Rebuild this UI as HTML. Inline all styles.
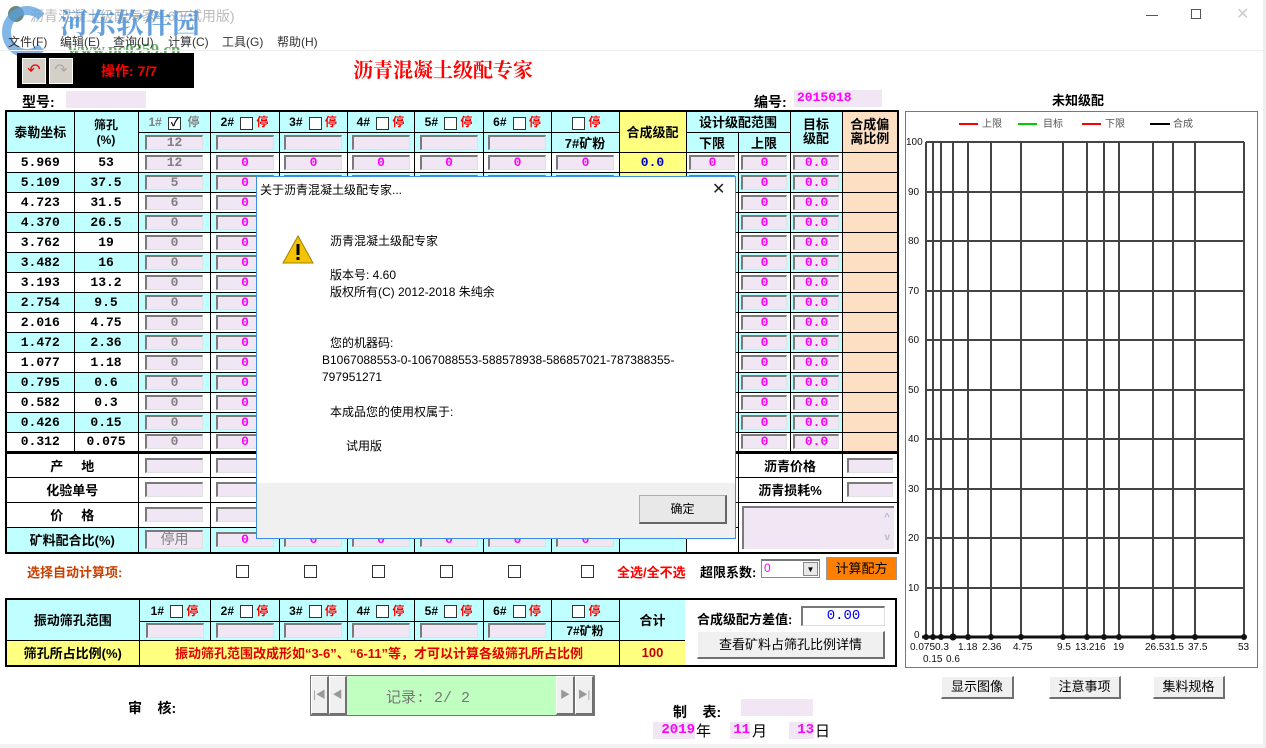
<!DOCTYPE html>
<html><head><meta charset="utf-8">
<style>
*{box-sizing:border-box;margin:0;padding:0}
body{width:1266px;height:748px;overflow:hidden;background:#fff;position:relative;font-family:"Liberation Sans","Noto Sans CJK SC",sans-serif;font-size:12px;color:#000}
.a{position:absolute}
.b{font-weight:bold}
table{border-collapse:collapse;table-layout:fixed;position:absolute}
td{border:1px solid #000;text-align:center;vertical-align:middle;padding:0;font-weight:bold;font-size:12px;overflow:hidden;white-space:nowrap}
.c{background:#c0ffff}.y{background:#ffff80}.p{background:#fde0c4}.w{background:#fff}
.i{display:inline-block;width:58px;height:15px;background:#f0e6f4;border-top:2px solid #7a7a7a;border-left:2px solid #7a7a7a;border-right:1px solid #e0e0e0;border-bottom:1px solid #e0e0e0;line-height:12px;font-family:"Liberation Mono",monospace;font-weight:bold;font-size:13px;color:#ff00ff;vertical-align:middle}
.g{color:#808080}
.s{width:46px}
.ck{display:inline-block;width:13px;height:13px;border:1px solid #333;background:#fff;vertical-align:middle;margin:0 3px;font-size:11px;line-height:11px}
.r{color:#f00}
.n{font-family:"Liberation Mono",monospace;font-weight:bold;font-size:13px}
.btn{position:absolute;background:#f0f0f0;border:1px solid #fff;border-right:2px solid #707070;border-bottom:2px solid #707070;text-align:center;font-size:13px}
.m{position:absolute;top:33px;font-size:12px;color:#333}
</style></head><body>
<!-- title bar -->
<div class="a" style="left:8px;top:6px;width:16px;height:16px;border-radius:50%;background:#6a8a7a"></div>
<div class="a" style="left:30px;top:6px;font-size:14px;color:#bbb">沥青混凝土级配专家4.60(试用版)</div>
<div class="a" style="left:2px;top:6px;width:50px;height:52px;border-radius:50%;border:9px solid #5aa0e0;border-right-color:transparent;opacity:.75"></div>
<div class="a b" style="left:60px;top:2px;font-size:28px;color:#4a90d8;opacity:.85;font-family:'Noto Serif CJK SC',serif">河东软件园</div>
<div class="a b" style="left:68px;top:40px;font-size:17px;color:#3a9a3a;opacity:.8;font-family:'Liberation Serif',serif">www.pc0359.cn</div>
<div class="a" style="left:1146px;top:15px;width:12px;height:1px;background:#555"></div>
<div class="a" style="left:1191px;top:9px;width:10px;height:10px;border:1px solid #555"></div>
<div class="a" style="left:1236px;top:4px;font-size:16px;color:#ccc">✕</div>
<div class="m" style="left:8px">文件(F)</div><div class="m" style="left:60px">编辑(E)</div><div class="m" style="left:113px">查询(U)</div><div class="m" style="left:168px">计算(C)</div><div class="m" style="left:222px">工具(G)</div><div class="m" style="left:277px">帮助(H)</div>
<div class="a" style="left:0;top:50px;width:1266px;height:1px;background:#eee"></div>
<!-- black box -->
<div class="a" style="left:17px;top:53px;width:177px;height:35px;background:#000"></div>
<div class="a" style="left:22px;top:58px;width:24px;height:26px;background:#d4d0c8;border:1px solid #fff;color:#e00;font-size:16px;text-align:center;line-height:24px">↶</div>
<div class="a" style="left:49px;top:58px;width:24px;height:26px;background:#d4d0c8;border:1px solid #fff;color:#aaa;font-size:16px;text-align:center;line-height:24px">↷</div>
<div class="a b" style="left:101px;top:61px;color:#f00;font-size:14px">操作: 7/7</div>
<div class="a b" style="left:353px;top:54px;color:#f00;font-size:20px;font-family:'Noto Serif CJK SC',serif">沥青混凝土级配专家</div>
<div class="a b" style="left:22px;top:92px;font-size:14px">型号:</div>
<div class="a" style="left:66px;top:91px;width:80px;height:17px;background:#f0e6f4"></div>
<div class="a b" style="left:754px;top:92px;font-size:14px">编号:</div>
<div class="a" style="left:794px;top:90px;width:88px;height:17px;background:#f0e6f4;color:#f0f;font-weight:bold;font-family:'Liberation Mono',monospace;font-size:13px;padding-left:3px">2015018</div>

<table style="left:5px;top:110px;width:892px;border:2px solid #000">
<colgroup><col style="width:68px"><col style="width:64px"><col style="width:72px"><col style="width:69px"><col style="width:68px"><col style="width:67px"><col style="width:69px"><col style="width:68px"><col style="width:68px"><col style="width:67px"><col style="width:52px"><col style="width:52px"><col style="width:52px"><col style="width:56px"></colgroup>
<tr style="height:21px" class="c"><td rowspan="2" style="font-size:13px">泰勒坐标</td><td rowspan="2">筛孔<br>(%)</td><td class="g">1# <span class="ck" style="color:#000">✓</span> 停</td><td>2# <span class="ck"></span><span class="r">停</span></td><td>3# <span class="ck"></span><span class="r">停</span></td><td>4# <span class="ck"></span><span class="r">停</span></td><td>5# <span class="ck"></span><span class="r">停</span></td><td>6# <span class="ck"></span><span class="r">停</span></td><td><span class="ck"></span><span class="r">停</span></td><td rowspan="2" class="y" style="font-size:13px">合成级配</td><td colspan="2" style="font-size:13px">设计级配范围</td><td rowspan="2" style="font-size:13px;line-height:14px">目标<br>级配</td><td rowspan="2" class="p" style="font-size:13px;line-height:14px">合成偏<br>离比例</td></tr>
<tr style="height:20px" class="c"><td><span class="i g">12</span></td><td><span class="i"></span></td><td><span class="i"></span></td><td><span class="i"></span></td><td><span class="i"></span></td><td><span class="i"></span></td><td style="font-size:13px">7#矿粉</td><td style="font-size:13px">下限</td><td style="font-size:13px">上限</td></tr>
<tr style="height:20px" class="w"><td class="n">5.969</td><td class="n">53</td><td><span class="i g">12</span></td><td><span class="i">0</span></td><td><span class="i">0</span></td><td><span class="i">0</span></td><td><span class="i">0</span></td><td><span class="i">0</span></td><td><span class="i">0</span></td><td class="y n" style="color:#00c">0.0</td><td><span class="i s">0</span></td><td><span class="i s">0</span></td><td><span class="i s">0.0</span></td><td class="p"></td></tr>
<tr style="height:20px" class="c"><td class="n">5.109</td><td class="n">37.5</td><td><span class="i g">5</span></td><td><span class="i">0</span></td><td><span class="i">0</span></td><td><span class="i">0</span></td><td><span class="i">0</span></td><td><span class="i">0</span></td><td><span class="i">0</span></td><td class="y"></td><td><span class="i s">0</span></td><td><span class="i s">0</span></td><td><span class="i s">0.0</span></td><td class="p"></td></tr>
<tr style="height:20px" class="w"><td class="n">4.723</td><td class="n">31.5</td><td><span class="i g">6</span></td><td><span class="i">0</span></td><td><span class="i">0</span></td><td><span class="i">0</span></td><td><span class="i">0</span></td><td><span class="i">0</span></td><td><span class="i">0</span></td><td class="y"></td><td><span class="i s">0</span></td><td><span class="i s">0</span></td><td><span class="i s">0.0</span></td><td class="p"></td></tr>
<tr style="height:20px" class="c"><td class="n">4.370</td><td class="n">26.5</td><td><span class="i g">0</span></td><td><span class="i">0</span></td><td><span class="i">0</span></td><td><span class="i">0</span></td><td><span class="i">0</span></td><td><span class="i">0</span></td><td><span class="i">0</span></td><td class="y"></td><td><span class="i s">0</span></td><td><span class="i s">0</span></td><td><span class="i s">0.0</span></td><td class="p"></td></tr>
<tr style="height:20px" class="w"><td class="n">3.762</td><td class="n">19</td><td><span class="i g">0</span></td><td><span class="i">0</span></td><td><span class="i">0</span></td><td><span class="i">0</span></td><td><span class="i">0</span></td><td><span class="i">0</span></td><td><span class="i">0</span></td><td class="y"></td><td><span class="i s">0</span></td><td><span class="i s">0</span></td><td><span class="i s">0.0</span></td><td class="p"></td></tr>
<tr style="height:20px" class="c"><td class="n">3.482</td><td class="n">16</td><td><span class="i g">0</span></td><td><span class="i">0</span></td><td><span class="i">0</span></td><td><span class="i">0</span></td><td><span class="i">0</span></td><td><span class="i">0</span></td><td><span class="i">0</span></td><td class="y"></td><td><span class="i s">0</span></td><td><span class="i s">0</span></td><td><span class="i s">0.0</span></td><td class="p"></td></tr>
<tr style="height:20px" class="w"><td class="n">3.193</td><td class="n">13.2</td><td><span class="i g">0</span></td><td><span class="i">0</span></td><td><span class="i">0</span></td><td><span class="i">0</span></td><td><span class="i">0</span></td><td><span class="i">0</span></td><td><span class="i">0</span></td><td class="y"></td><td><span class="i s">0</span></td><td><span class="i s">0</span></td><td><span class="i s">0.0</span></td><td class="p"></td></tr>
<tr style="height:20px" class="c"><td class="n">2.754</td><td class="n">9.5</td><td><span class="i g">0</span></td><td><span class="i">0</span></td><td><span class="i">0</span></td><td><span class="i">0</span></td><td><span class="i">0</span></td><td><span class="i">0</span></td><td><span class="i">0</span></td><td class="y"></td><td><span class="i s">0</span></td><td><span class="i s">0</span></td><td><span class="i s">0.0</span></td><td class="p"></td></tr>
<tr style="height:20px" class="w"><td class="n">2.016</td><td class="n">4.75</td><td><span class="i g">0</span></td><td><span class="i">0</span></td><td><span class="i">0</span></td><td><span class="i">0</span></td><td><span class="i">0</span></td><td><span class="i">0</span></td><td><span class="i">0</span></td><td class="y"></td><td><span class="i s">0</span></td><td><span class="i s">0</span></td><td><span class="i s">0.0</span></td><td class="p"></td></tr>
<tr style="height:20px" class="c"><td class="n">1.472</td><td class="n">2.36</td><td><span class="i g">0</span></td><td><span class="i">0</span></td><td><span class="i">0</span></td><td><span class="i">0</span></td><td><span class="i">0</span></td><td><span class="i">0</span></td><td><span class="i">0</span></td><td class="y"></td><td><span class="i s">0</span></td><td><span class="i s">0</span></td><td><span class="i s">0.0</span></td><td class="p"></td></tr>
<tr style="height:20px" class="w"><td class="n">1.077</td><td class="n">1.18</td><td><span class="i g">0</span></td><td><span class="i">0</span></td><td><span class="i">0</span></td><td><span class="i">0</span></td><td><span class="i">0</span></td><td><span class="i">0</span></td><td><span class="i">0</span></td><td class="y"></td><td><span class="i s">0</span></td><td><span class="i s">0</span></td><td><span class="i s">0.0</span></td><td class="p"></td></tr>
<tr style="height:20px" class="c"><td class="n">0.795</td><td class="n">0.6</td><td><span class="i g">0</span></td><td><span class="i">0</span></td><td><span class="i">0</span></td><td><span class="i">0</span></td><td><span class="i">0</span></td><td><span class="i">0</span></td><td><span class="i">0</span></td><td class="y"></td><td><span class="i s">0</span></td><td><span class="i s">0</span></td><td><span class="i s">0.0</span></td><td class="p"></td></tr>
<tr style="height:20px" class="w"><td class="n">0.582</td><td class="n">0.3</td><td><span class="i g">0</span></td><td><span class="i">0</span></td><td><span class="i">0</span></td><td><span class="i">0</span></td><td><span class="i">0</span></td><td><span class="i">0</span></td><td><span class="i">0</span></td><td class="y"></td><td><span class="i s">0</span></td><td><span class="i s">0</span></td><td><span class="i s">0.0</span></td><td class="p"></td></tr>
<tr style="height:20px" class="c"><td class="n">0.426</td><td class="n">0.15</td><td><span class="i g">0</span></td><td><span class="i">0</span></td><td><span class="i">0</span></td><td><span class="i">0</span></td><td><span class="i">0</span></td><td><span class="i">0</span></td><td><span class="i">0</span></td><td class="y"></td><td><span class="i s">0</span></td><td><span class="i s">0</span></td><td><span class="i s">0.0</span></td><td class="p"></td></tr>
<tr style="height:20px" class="w"><td class="n">0.312</td><td class="n">0.075</td><td><span class="i g">0</span></td><td><span class="i">0</span></td><td><span class="i">0</span></td><td><span class="i">0</span></td><td><span class="i">0</span></td><td><span class="i">0</span></td><td><span class="i">0</span></td><td class="y"></td><td><span class="i s">0</span></td><td><span class="i s">0</span></td><td><span class="i s">0.0</span></td><td class="p"></td></tr>
<tr style="height:25px;border-top:3px solid #000" class="w"><td colspan="2" style="font-size:13px">产 &nbsp; &nbsp; 地</td><td><span class="i"></span></td><td><span class="i"></span></td><td><span class="i"></span></td><td><span class="i"></span></td><td><span class="i"></span></td><td><span class="i"></span></td><td><span class="i"></span></td><td></td><td></td><td colspan="2" style="font-size:13px">沥青价格</td><td><span class="i s"></span></td></tr>
<tr style="height:25px" class="w"><td colspan="2" style="font-size:13px">化验单号</td><td><span class="i"></span></td><td><span class="i"></span></td><td><span class="i"></span></td><td><span class="i"></span></td><td><span class="i"></span></td><td><span class="i"></span></td><td><span class="i"></span></td><td></td><td></td><td colspan="2" style="font-size:13px">沥青损耗%</td><td><span class="i s"></span></td></tr>
<tr style="height:25px" class="w"><td colspan="2" style="font-size:13px">价 &nbsp; &nbsp; 格</td><td><span class="i"></span></td><td><span class="i"></span></td><td><span class="i"></span></td><td><span class="i"></span></td><td><span class="i"></span></td><td><span class="i"></span></td><td><span class="i"></span></td><td></td><td></td><td colspan="3" rowspan="2" style="padding:3px"><div style="height:43px;background:#f0e6f4;border-top:2px solid #7a7a7a;border-left:2px solid #7a7a7a;text-align:right;color:#bbb;font-size:10px;line-height:20px;padding-right:4px">^<br>v</div></td></tr>
<tr style="height:25px" class="c"><td colspan="2" style="font-size:13px">矿料配合比(%)</td><td><span class="i g" style="height:19px;font-size:14px;font-family:'Noto Sans CJK SC';font-weight:normal;line-height:15px">停用</span></td><td><span class="i">0</span></td><td><span class="i">0</span></td><td><span class="i">0</span></td><td><span class="i">0</span></td><td><span class="i">0</span></td><td><span class="i">0</span></td><td class="c"></td><td class="w"></td></tr>
</table>

<!-- auto calc row -->
<div class="a b" style="left:27px;top:562px;font-size:13px;color:#c84000">选择自动计算项:</div>
<div class="a ck" style="left:233px;top:565px"></div><div class="a ck" style="left:301px;top:565px"></div><div class="a ck" style="left:369px;top:565px"></div><div class="a ck" style="left:437px;top:565px"></div><div class="a ck" style="left:505px;top:565px"></div><div class="a ck" style="left:578px;top:565px"></div>
<div class="a b" style="left:617px;top:562px;font-size:13px;color:#f00">全选/全不选</div>
<div class="a b" style="left:700px;top:562px;font-size:13px">超限系数:</div>
<div class="a" style="left:761px;top:559px;width:59px;height:19px;border:1px solid #888;border-top:2px solid #777;background:#fff;color:#f0f;font-size:12px;padding-left:2px">0<span style="position:absolute;right:1px;top:1px;width:15px;height:14px;background:#e8e8e8;border:1px solid #888;font-size:8px;color:#000;text-align:center;line-height:13px">▼</span></div>
<div class="a" style="left:826px;top:557px;width:71px;height:23px;background:#ff8000;border:1px solid #999;text-align:center;font-size:13px;line-height:21px">计算配方</div>

<table style="left:5px;top:598px;width:680px;border:2px solid #000;border-right:1px solid #000">
<colgroup><col style="width:133px"><col style="width:71px"><col style="width:69px"><col style="width:68px"><col style="width:67px"><col style="width:69px"><col style="width:68px"><col style="width:68px"><col style="width:67px"></colgroup>
<tr style="height:22px" class="c"><td rowspan="2" style="font-size:13px">振动筛孔范围</td><td>1# <span class="ck"></span><span class="r">停</span></td><td>2# <span class="ck"></span><span class="r">停</span></td><td>3# <span class="ck"></span><span class="r">停</span></td><td>4# <span class="ck"></span><span class="r">停</span></td><td>5# <span class="ck"></span><span class="r">停</span></td><td>6# <span class="ck"></span><span class="r">停</span></td><td><span class="ck"></span><span class="r">停</span></td><td rowspan="2" style="font-size:13px">合计</td></tr>
<tr style="height:19px" class="c"><td><span class="i"></span></td><td><span class="i"></span></td><td><span class="i"></span></td><td><span class="i"></span></td><td><span class="i"></span></td><td><span class="i"></span></td><td style="font-size:12px">7#矿粉</td></tr>
<tr style="height:26px" class="y"><td style="font-size:13px">筛孔所占比例(%)</td><td colspan="7" style="color:#e00000;font-size:13px">振动筛孔范围改成形如“3-6”、“6-11”等，才可以计算各级筛孔所占比例</td><td style="color:#c00000;font-size:13px">100</td></tr>
</table>
<div class="a" style="left:685px;top:598px;width:212px;height:69px;border:2px solid #000;border-left:none;background:#fff"></div>
<div class="a b" style="left:697px;top:609px;font-size:13px">合成级配方差值:</div>
<div class="a" style="left:801px;top:606px;width:84px;height:20px;border:2px solid #777;border-right:1px solid #ddd;border-bottom:1px solid #ddd;color:#00f;font-family:'Liberation Mono',monospace;font-size:14px;text-align:center;line-height:16px">0.00</div>
<div class="btn" style="left:697px;top:631px;width:188px;height:28px;line-height:25px">查看矿料占筛孔比例详情</div>

<!-- bottom -->
<div class="a b" style="left:128px;top:698px;font-size:14px">审 &nbsp; &nbsp;核:</div>
<div class="a" style="left:310px;top:675px;width:285px;height:41px;border:1px solid #777;background:#c0ffc0"></div>
<div class="btn" style="left:311px;top:676px;width:18px;height:39px;color:#999;line-height:37px;font-size:10px">|◀</div>
<div class="btn" style="left:329px;top:676px;width:18px;height:39px;color:#999;line-height:37px;font-size:10px">◀</div>
<div class="btn" style="left:556px;top:676px;width:19px;height:39px;color:#999;line-height:37px;font-size:10px">▶</div>
<div class="btn" style="left:575px;top:676px;width:19px;height:39px;color:#999;line-height:37px;font-size:10px">▶|</div>
<div class="a" style="left:386px;top:686px;font-size:15px;color:#777;font-family:'Liberation Mono','Noto Sans CJK SC',monospace">记录:  2/ 2</div>
<div class="a b" style="left:673px;top:702px;font-size:14px">制 &nbsp; &nbsp;表:</div>
<div class="a" style="left:741px;top:699px;width:72px;height:17px;background:#f0e6f4"></div>
<div class="a" style="left:653px;top:722px;width:42px;height:17px;background:#f0e6f4;color:#f0f;font-weight:bold;font-size:14px;text-align:right;font-family:'Liberation Mono',monospace">2019</div>
<div class="a" style="left:696px;top:720px;font-size:15px">年</div>
<div class="a" style="left:730px;top:722px;width:20px;height:17px;background:#f0e6f4;color:#f0f;font-weight:bold;font-size:14px;text-align:right;font-family:'Liberation Mono',monospace">11</div>
<div class="a" style="left:752px;top:720px;font-size:15px">月</div>
<div class="a" style="left:789px;top:722px;width:25px;height:17px;background:#f0e6f4;color:#f0f;font-weight:bold;font-size:14px;text-align:right;font-family:'Liberation Mono',monospace">13</div>
<div class="a" style="left:815px;top:720px;font-size:15px">日</div>
<div class="a" style="left:0;top:744px;width:1266px;height:4px;background:#f2f2f2"></div>

<!-- chart -->
<div class="a b" style="left:1052px;top:90px;font-size:13px">未知级配</div>
<svg class="a" style="left:905px;top:111px" width="354" height="557" viewBox="905 111 354 557">
<rect x="905.5" y="111.5" width="352" height="556" fill="#fff" stroke="#777"/>
<g font-family="Liberation Sans,Noto Sans CJK SC,sans-serif" font-size="10" fill="#555">
<line x1="959" y1="124" x2="978" y2="124" stroke="#f00" stroke-width="2"/><text x="982" y="127">上限</text>
<line x1="1018" y1="124" x2="1037" y2="124" stroke="#0c0" stroke-width="2"/><text x="1043" y="127">目标</text>
<line x1="1082" y1="124" x2="1101" y2="124" stroke="#f00" stroke-width="2"/><text x="1105" y="127">下限</text>
<line x1="1150" y1="124" x2="1170" y2="124" stroke="#000" stroke-width="2"/><text x="1173" y="127">合成</text>
</g>
<g stroke="#444" stroke-width="2">
<line x1="926" y1="142" x2="1244" y2="142"/><line x1="926" y1="192" x2="1244" y2="192"/><line x1="926" y1="241" x2="1244" y2="241"/><line x1="926" y1="291" x2="1244" y2="291"/><line x1="926" y1="340" x2="1244" y2="340"/><line x1="926" y1="390" x2="1244" y2="390"/><line x1="926" y1="439" x2="1244" y2="439"/><line x1="926" y1="489" x2="1244" y2="489"/><line x1="926" y1="538" x2="1244" y2="538"/><line x1="926" y1="588" x2="1244" y2="588"/>
<line x1="926" y1="142" x2="926" y2="637"/><line x1="933" y1="142" x2="933" y2="637"/><line x1="941" y1="142" x2="941" y2="637"/><line x1="953" y1="142" x2="953" y2="637"/><line x1="968" y1="142" x2="968" y2="637"/><line x1="991" y1="142" x2="991" y2="637"/><line x1="1021" y1="142" x2="1021" y2="637"/><line x1="1063" y1="142" x2="1063" y2="637"/><line x1="1087" y1="142" x2="1087" y2="637"/><line x1="1104" y1="142" x2="1104" y2="637"/><line x1="1119" y1="142" x2="1119" y2="637"/><line x1="1153" y1="142" x2="1153" y2="637"/><line x1="1173" y1="142" x2="1173" y2="637"/><line x1="1195" y1="142" x2="1195" y2="637"/><line x1="1244" y1="142" x2="1244" y2="637"/>
<line x1="922" y1="637" x2="1246" y2="637" stroke="#111" stroke-width="3"/>
</g>
<g fill="#111"><circle cx="926" cy="637" r="3"/><circle cx="933" cy="637" r="3"/><circle cx="941" cy="637" r="3"/><circle cx="953" cy="637" r="3.5"/><circle cx="968" cy="637" r="3"/><circle cx="991" cy="637" r="3"/><circle cx="1021" cy="637" r="3"/><circle cx="1063" cy="637" r="3"/><circle cx="1087" cy="637" r="3"/><circle cx="1104" cy="637" r="3"/><circle cx="1119" cy="637" r="3"/><circle cx="1153" cy="637" r="3"/><circle cx="1173" cy="637" r="3"/><circle cx="1195" cy="637" r="3"/><circle cx="1244" cy="637" r="3"/></g>
<g font-family="Liberation Sans,sans-serif" font-size="10" fill="#111">
<text x="906" y="145">100</text><text x="908" y="195">90</text><text x="908" y="244">80</text><text x="908" y="294">70</text><text x="908" y="343">60</text><text x="908" y="393">50</text><text x="908" y="442">40</text><text x="908" y="492">30</text><text x="908" y="541">20</text><text x="908" y="591">10</text><text x="914" y="638">0</text>
<text x="910" y="650">0.0750.3</text><text x="958" y="650">1.18</text><text x="982" y="650">2.36</text><text x="1013" y="650">4.75</text><text x="1057" y="650">9.5</text><text x="1075" y="650">13.216</text><text x="1113" y="650">19</text><text x="1145" y="650">26.531.5</text><text x="1188" y="650">37.5</text><text x="1238" y="650">53</text>
<text x="923" y="662">0.15</text><text x="946" y="662">0.6</text>
</g>
</svg>
<div class="btn" style="left:941px;top:676px;width:73px;height:23px;line-height:20px">显示图像</div>
<div class="btn" style="left:1049px;top:676px;width:72px;height:23px;line-height:20px">注意事项</div>
<div class="btn" style="left:1153px;top:676px;width:72px;height:23px;line-height:20px">集料规格</div>
<div class="a" style="left:1263px;top:0;width:3px;height:748px;background:#eee"></div>

<!-- dialog -->
<div class="a" style="left:256px;top:176px;width:480px;height:363px;background:#fff;border:1px solid #3c8ce0"></div>
<div class="a" style="left:257px;top:483px;width:478px;height:55px;background:#f0f0f0"></div>
<div class="a" style="left:260px;top:181px;font-size:12px">关于沥青混凝土级配专家...</div>
<div class="a" style="left:712px;top:179px;font-size:16px;color:#222">✕</div>
<svg class="a" style="left:282px;top:235px" width="32" height="30" viewBox="0 0 32 30"><path d="M16 1 L31 28 L1 28 Z" fill="#f5c400" stroke="#a08000" stroke-width="1"/><rect x="14.5" y="9" width="3" height="11" fill="#000"/><rect x="14.5" y="22" width="3" height="3" fill="#000"/></svg>
<div class="a" style="left:330px;top:233px;font-size:12px;line-height:17px">沥青混凝土级配专家</div>
<div class="a" style="left:330px;top:267px;font-size:12px;line-height:17px">版本号: 4.60<br>版权所有(C) 2012-2018 朱纯余</div>
<div class="a" style="left:330px;top:335px;font-size:12px;line-height:17px">您的机器码:</div>
<div class="a" style="left:322px;top:352px;font-size:12px;line-height:17px">B1067088553-0-1067088553-588578938-586857021-787388355-<br>797951271</div>
<div class="a" style="left:330px;top:403px;font-size:12px">本成品您的使用权属于:</div>
<div class="a" style="left:346px;top:437px;font-size:12px">试用版</div>
<div class="a" style="left:639px;top:495px;width:88px;height:29px;background:#e8e8e8;border:1px solid #adadad;border-right:2px solid #666;border-bottom:2px solid #666;text-align:center;line-height:26px;font-size:12px">确定</div>
</body></html>
